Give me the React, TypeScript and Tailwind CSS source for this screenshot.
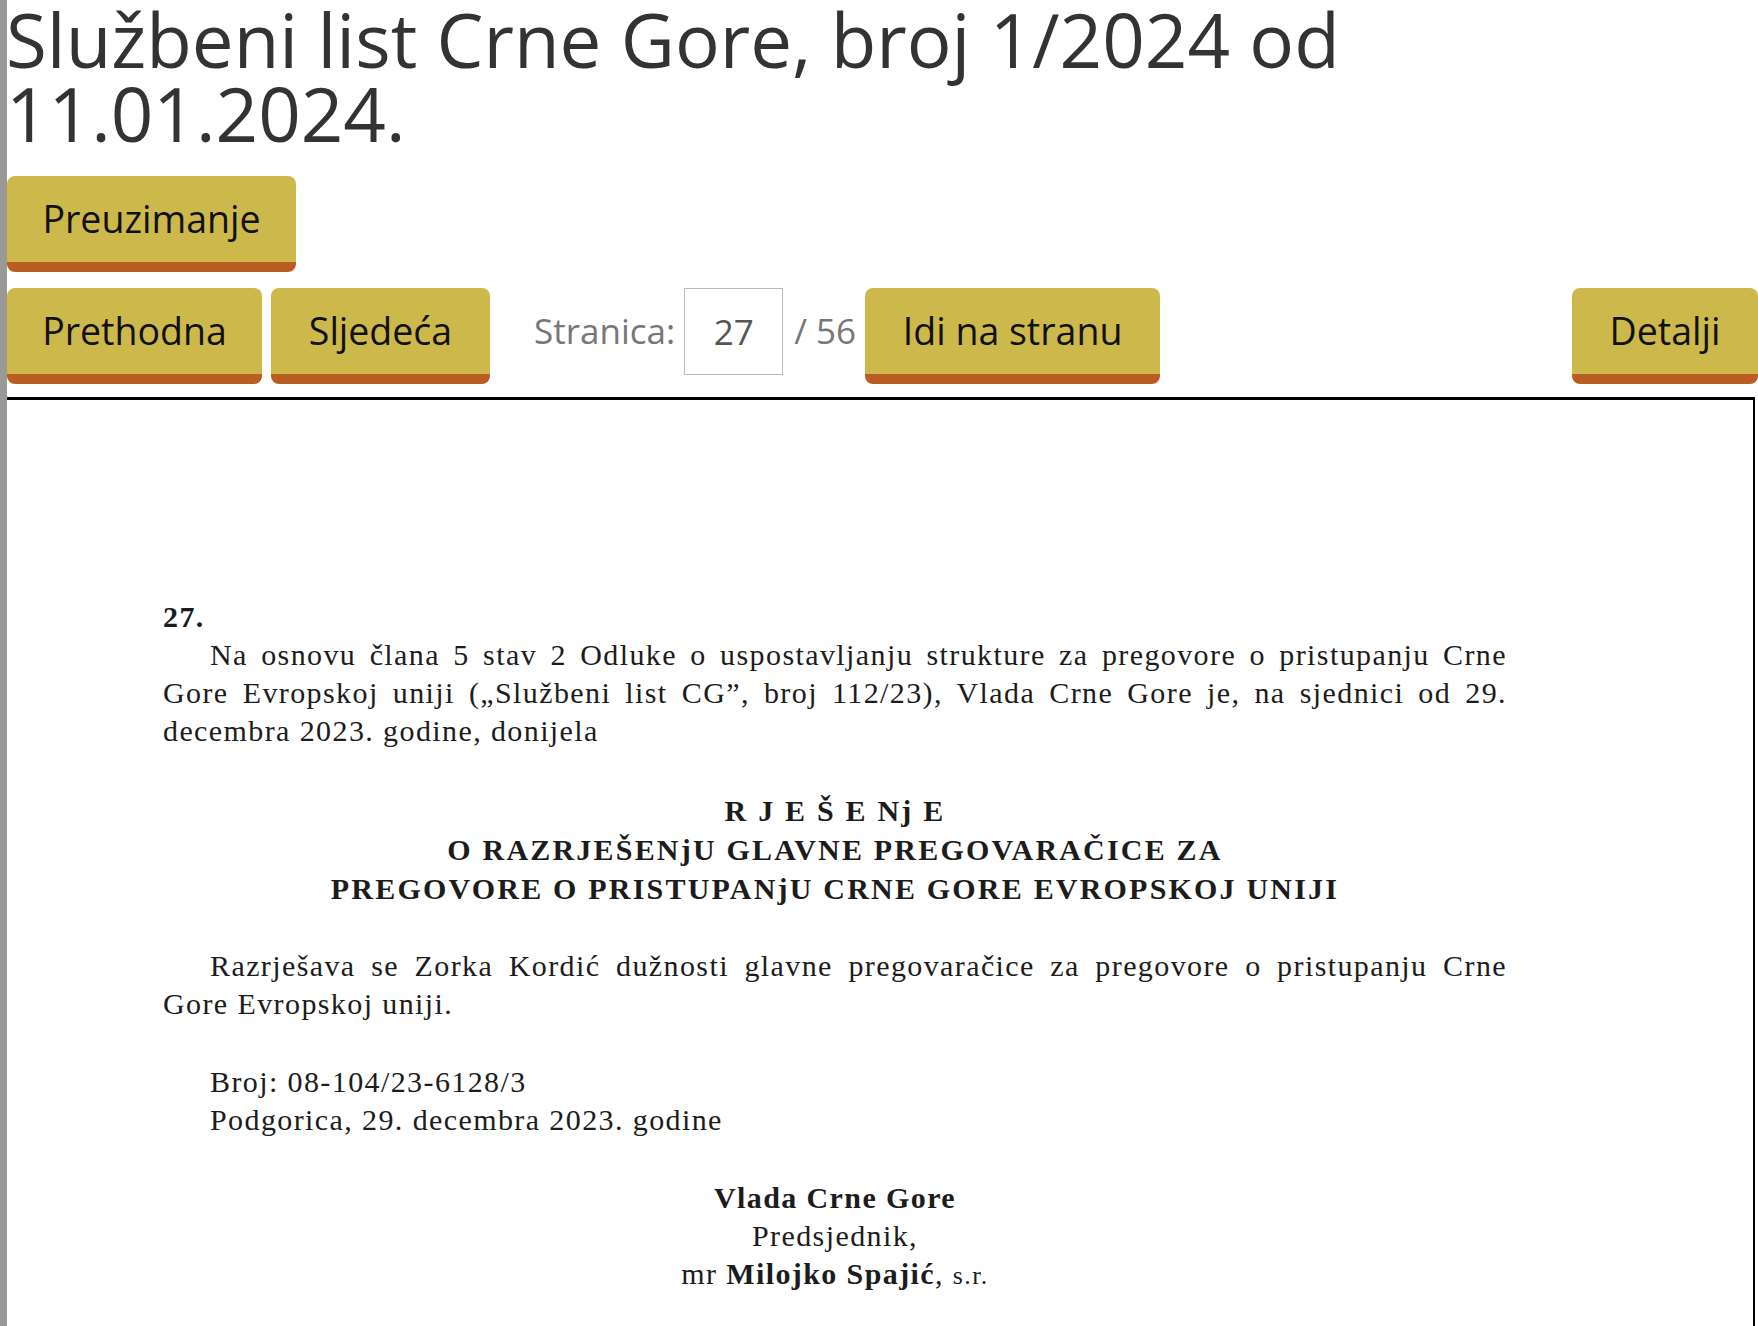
import React from 'react';

const GoldButton: React.FC<{ label: string; width: string }> = ({ label, width }) => (
  <button
    className={`${width} h-[96px] shrink-0 rounded-[8px] bg-[#cdb84c] border-b-[10px] border-[#ba5d22] text-[37.5px] text-[#111] flex items-center justify-center`}
  >
    {label}
  </button>
);

const JustLine: React.FC<{ children: React.ReactNode; indent?: boolean }> = ({ children, indent }) => (
  <div className={`text-justify [text-align-last:justify] ${indent ? 'pl-[47px]' : ''}`}>{children}</div>
);

export default function App() {
  return (
    <div className="min-h-screen bg-white border-l-[7px] border-[#999] font-['Open_Sans',sans-serif] overflow-hidden">
      <h1 className="mt-[2px] -ml-[1px] text-[74.5px] leading-[74px] font-normal text-[#333]">
        Službeni list Crne Gore, broj 1/2024 od
        <br />
        11.01.2024.
      </h1>

      <div className="mt-[26px]">
        <GoldButton label="Preuzimanje" width="w-[289px]" />
      </div>

      <div className="mt-[16px] flex items-start gap-[9px]">
        <GoldButton label="Prethodna" width="w-[255px]" />
        <GoldButton label="Sljedeća" width="w-[219px]" />
        <span className="ml-[35px] h-[86px] flex items-center text-[35px] text-[#777]">Stranica:</span>
        <input
          readOnly
          value="27"
          className="w-[99px] h-[87px] border border-[#bbb] text-center text-[35px] text-[#555] outline-none"
        />
        <span className="ml-[2px] h-[86px] flex items-center text-[35px] text-[#777]">/ 56</span>
        <GoldButton label="Idi na stranu" width="w-[295px]" />
        <div className="ml-auto">
          <GoldButton label="Detalji" width="w-[186px]" />
        </div>
      </div>

      <div className="mt-[13px] mr-[3px] h-[1000px] border-t-[3px] border-r-2 border-black">
        <div className="pt-[198px] pl-[156px]">
          <div className="w-[1344px] font-['Liberation_Serif',serif] text-[30px] leading-[38px] tracking-[1.4px] text-[#1c1c1c]">
            <div className="font-bold">27.</div>
            <JustLine indent>
              Na osnovu člana 5 stav 2 Odluke o uspostavljanju strukture za pregovore o pristupanju Crne
            </JustLine>
            <JustLine>
              Gore Evropskoj uniji („Službeni list CG”, broj 112/23), Vlada Crne Gore je, na sjednici od 29.
            </JustLine>
            <div>decembra 2023. godine, donijela</div>

            <div className="mt-[41px] text-center font-bold leading-[39px] tracking-[2.2px]">
              <div>R J E Š E Nj E</div>
              <div>O RAZRJEŠENjU GLAVNE PREGOVARAČICE ZA</div>
              <div>PREGOVORE O PRISTUPANjU CRNE GORE EVROPSKOJ UNIJI</div>
            </div>

            <div className="mt-[39px]">
              <JustLine indent>
                Razrješava se Zorka Kordić dužnosti glavne pregovaračice za pregovore o pristupanju Crne
              </JustLine>
              <div>Gore Evropskoj uniji.</div>
            </div>

            <div className="mt-[40px] pl-[47px]">
              <div>Broj: 08-104/23-6128/3</div>
              <div>Podgorica, 29. decembra 2023. godine</div>
            </div>

            <div className="mt-[40px] text-center">
              <div className="font-bold">Vlada Crne Gore</div>
              <div>Predsjednik,</div>
              <div>
                mr <span className="font-bold">Milojko Spajić</span>, <span className="text-[26px]">s.r.</span>
              </div>
            </div>
          </div>
        </div>
      </div>
    </div>
  );
}
